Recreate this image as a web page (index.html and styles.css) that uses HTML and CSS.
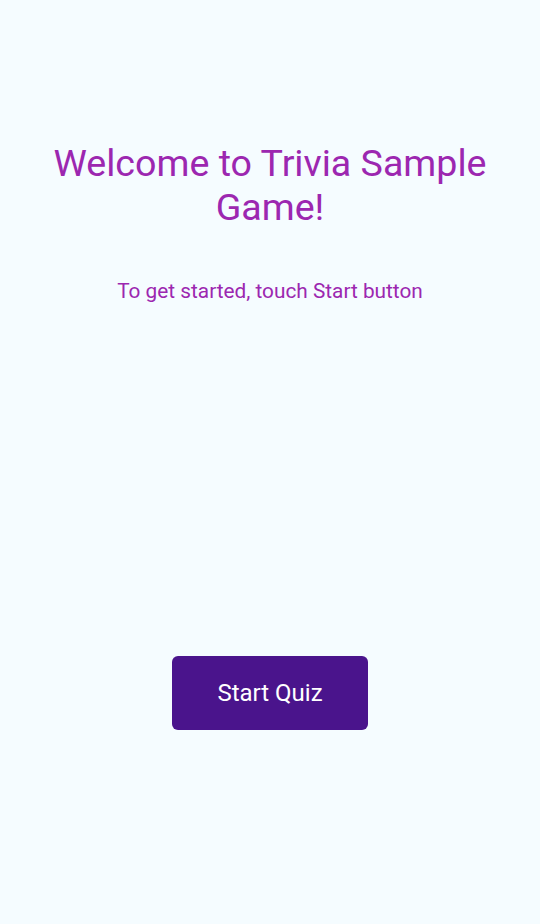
FILE: index.html
```html
<!DOCTYPE html>
<html>
<head>
<meta charset="utf-8">
<link rel="stylesheet" href="styles.css">
</head>
<body>
<main class="screen">
  <h1 class="title">Welcome to Trivia Sample Game!</h1>
  <p class="subtitle">To get started, touch Start button</p>
  <button class="start-btn">Start Quiz</button>
</main>
</body>
</html>
```
FILE: styles.css
```css
html, body {
  margin: 0;
  padding: 0;
  background: #f5fcff;
}
.screen {
  width: 540px;
  height: 924px;
  display: flex;
  flex-direction: column;
  align-items: center;
  box-sizing: border-box;
  padding: 141px 40px 0;
  font-family: Roboto, "Noto Sans", sans-serif;
}
.title {
  margin: 0;
  font-size: 37.6px;
  line-height: 44px;
  font-weight: 400;
  color: #9c27b0;
  text-align: center;
}
.subtitle {
  margin: 50px 0 0;
  font-size: 20.8px;
  line-height: 25px;
  color: #9c27b0;
  text-align: center;
}
.start-btn {
  margin-top: 352px;
  width: 196px;
  height: 74px;
  border: none;
  border-radius: 6px;
  background: #4a148c;
  color: #ffffff;
  font-family: Roboto, "Noto Sans", sans-serif;
  font-size: 24px;
  padding: 0;
}
```
